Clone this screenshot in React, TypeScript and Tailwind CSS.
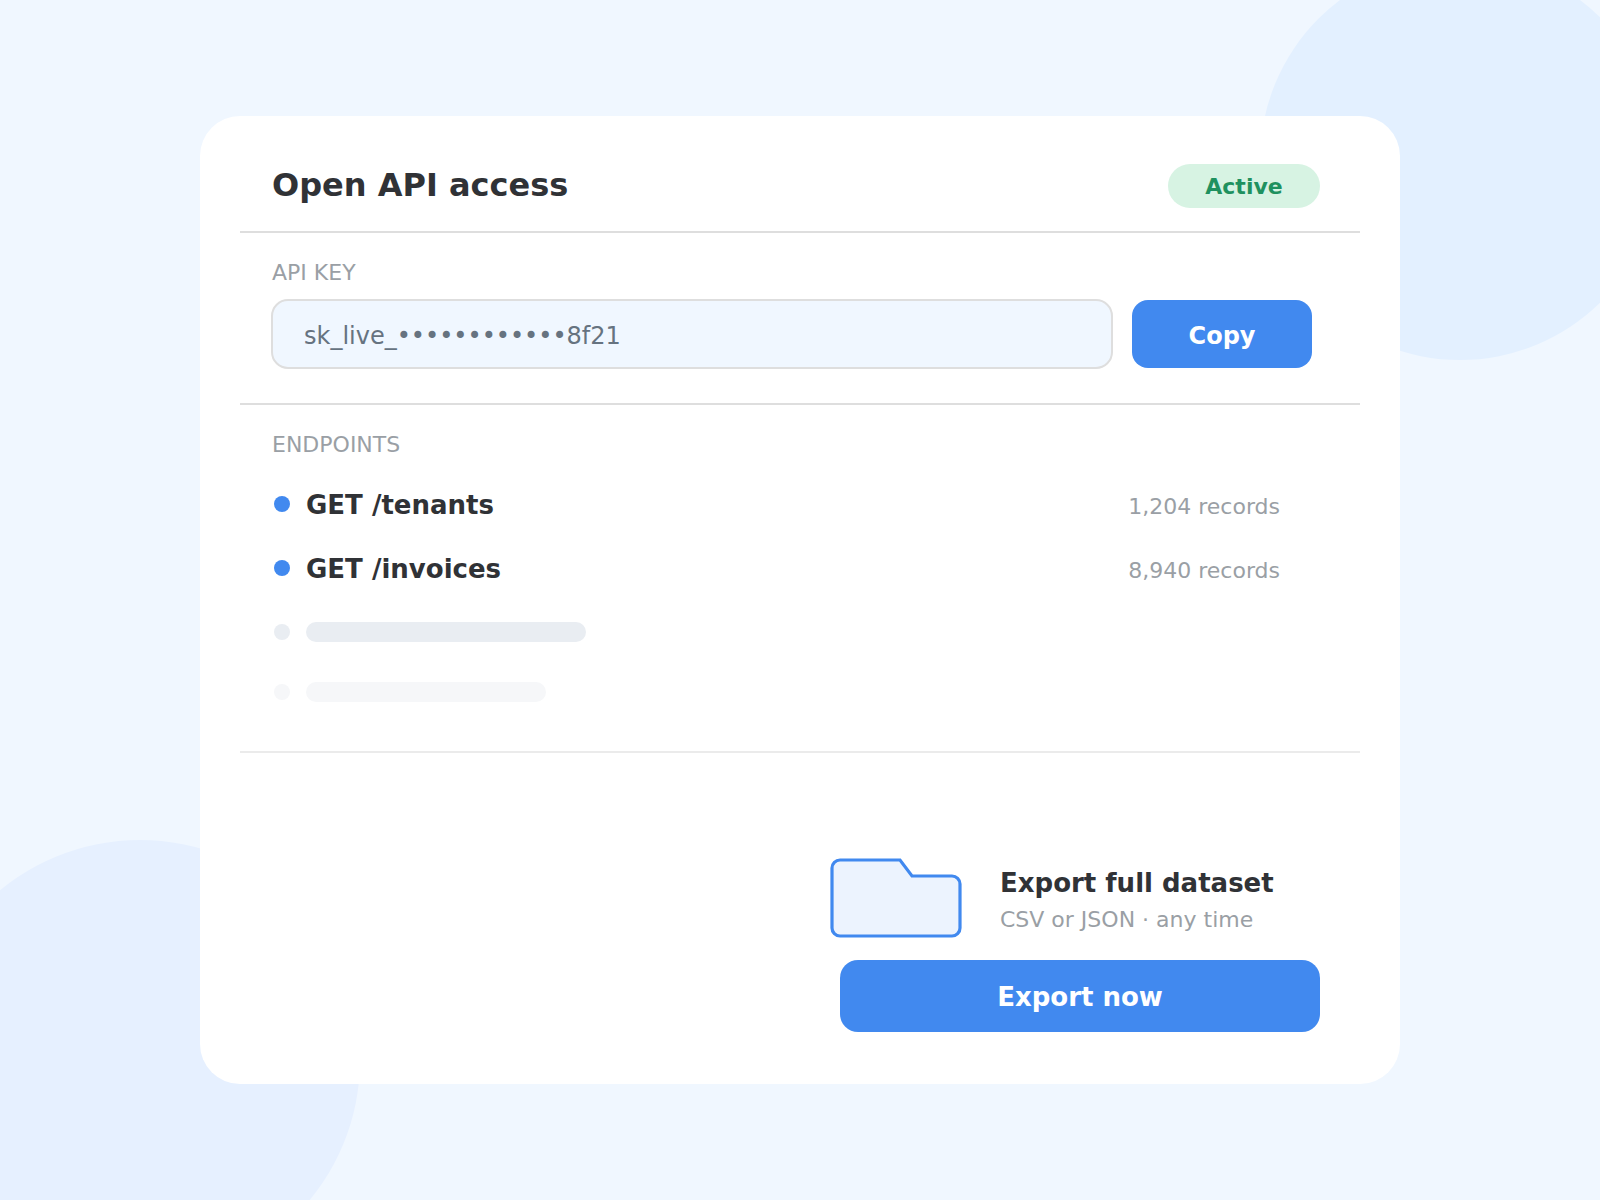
import React from "react";

type Endpoint = { method: string; path: string; records: string };

const endpoints: Endpoint[] = [
  { method: "GET", path: "/tenants", records: "1,204 records" },
  { method: "GET", path: "/invoices", records: "8,940 records" },
];

function FolderIcon() {
  return (
    <svg
      width="132"
      height="80"
      viewBox="0 0 132 80"
      fill="#ecf3fe"
      stroke="#4189ef"
      strokeWidth="3.2"
      className="shrink-0"
      aria-hidden="true"
    >
      <path d="M10 2H70L82 18H122A8 8 0 0 1 130 26V70A8 8 0 0 1 122 78H10A8 8 0 0 1 2 70V10A8 8 0 0 1 10 2Z" />
    </svg>
  );
}

function Header() {
  return (
    <header className="flex items-center justify-between border-b-2 border-[#dedede] pt-12 pr-10 pb-[23px] pl-8">
      <h1 className="pb-0.5 text-[32px] leading-10 font-bold text-[#303236]">Open API access</h1>
      <span className="flex h-11 w-[152px] items-center justify-center rounded-full bg-[#d7f3e3] pt-0.5 text-[22px] leading-[30px] font-bold text-[#1f915f]">
        Active
      </span>
    </header>
  );
}

function ApiKeySection() {
  return (
    <section className="border-b-2 border-[#dedede] pt-[25px] pb-[34px]">
      <label htmlFor="api-key" className="block pl-8 text-[22px] leading-[30px] text-[#9a9fa5]">
        API KEY
      </label>
      <div className="mt-[11px] flex items-center gap-[19px] pr-12 pl-[31px]">
        <input
          id="api-key"
          type="text"
          readOnly
          value="sk_live_••••••••••••8f21"
          className="h-[70px] min-w-0 flex-1 rounded-[17px] border-2 border-[#dedede] bg-[#f0f7ff] px-[31px] pt-[3px] text-2xl text-[#667380] outline-none"
        />
        <button
          type="button"
          className="h-[68px] w-[180px] shrink-0 rounded-2xl bg-[#4189ef] pt-[3px] text-2xl font-bold text-white"
        >
          Copy
        </button>
      </div>
    </section>
  );
}

function EndpointsSection() {
  return (
    <section className="border-b-2 border-[#ebebeb] pt-[25px] pb-[31px] pl-8">
      <h2 className="text-[22px] leading-[30px] text-[#9a9fa5]">ENDPOINTS</h2>
      <ul className="mt-3">
        {endpoints.map((e) => (
          <li key={e.path} className="flex h-16 items-center gap-4 pr-20 pl-0.5">
            <span className="size-4 shrink-0 rounded-full bg-[#4189ef]" />
            <div className="flex flex-1 items-baseline justify-between pt-0.5">
              <span className="text-[26px] leading-9 font-bold text-[#303236]">
                {e.method} {e.path}
              </span>
              <span className="text-[22px] leading-[30px] text-[#9a9fa5]">{e.records}</span>
            </div>
          </li>
        ))}
        <li aria-hidden="true" className="flex h-16 items-center gap-4 pl-0.5">
          <span className="size-4 rounded-full bg-[#e9edf2]" />
          <span className="h-5 w-[280px] rounded-full bg-[#e9edf2]" />
        </li>
        <li aria-hidden="true" className="flex h-14 items-center gap-4 pl-0.5">
          <span className="size-4 rounded-full bg-[#f6f7f9]" />
          <span className="h-5 w-60 rounded-full bg-[#f6f7f9]" />
        </li>
      </ul>
    </section>
  );
}

function ExportSection() {
  return (
    <section className="flex justify-end pt-[105px] pr-10 pb-[52px]">
      <div className="w-[490px]">
        <div className="flex items-end gap-[38px]">
          <FolderIcon />
          <div className="whitespace-nowrap">
            <h2 className="text-[26px] leading-[37px] font-bold text-[#303236]">Export full dataset</h2>
            <p className="text-[22px] leading-9 text-[#9a9fa5]">CSV or JSON · any time</p>
          </div>
        </div>
        <div className="mt-[22px] pl-2.5">
          <button
            type="button"
            className="h-[72px] w-full rounded-[18px] bg-[#4189ef] pt-0.5 text-[26px] font-bold text-white"
          >
            Export now
          </button>
        </div>
      </div>
    </section>
  );
}

export default function App() {
  return (
    <main className="relative flex min-h-screen items-center justify-center overflow-hidden bg-[#f0f7ff] px-[12.5%] font-['DejaVu_Sans',sans-serif]">
      <div className="absolute -top-10 -right-15 size-100 rounded-full bg-[#e3f0ff]" />
      <div className="absolute -bottom-20 -left-20 size-110 rounded-full bg-[#e6f0ff]" />
      <div className="relative w-full rounded-[40px] bg-white px-10">
        <Header />
        <ApiKeySection />
        <EndpointsSection />
        <ExportSection />
      </div>
    </main>
  );
}
